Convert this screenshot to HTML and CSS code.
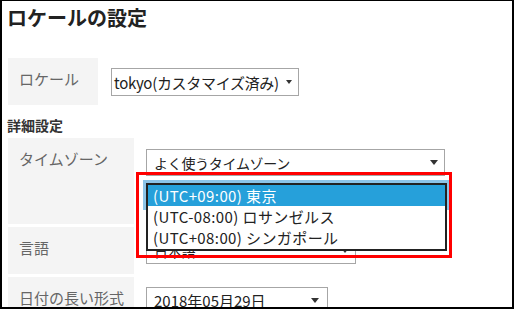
FILE: index.html
```html
<!DOCTYPE html>
<html lang="ja">
<head>
<meta charset="utf-8">
<title>ロケールの設定</title>
<link rel="stylesheet" href="styles.css">
</head>
<body>
<div class="frame">
  <h1 class="title">ロケールの設定</h1>

  <div class="row row-locale">
    <div class="lbl lbl-locale">ロケール</div>
    <div class="sel sel-locale"><span class="sel-text">tokyo(カスタマイズ済み)</span><span class="arrow arrow-small"></span></div>
  </div>

  <div class="section">詳細設定</div>

  <div class="row row-tz">
    <div class="lbl lbl-wide lbl-tz">タイムゾーン</div>
    <div class="sel sel-tz"><span class="sel-text">よく使うタイムゾーン</span><span class="arrow"></span></div>
  </div>

  <div class="row row-lang">
    <div class="lbl lbl-wide">言語</div>
    <div class="sel sel-lang"><span class="sel-text">日本語</span><span class="arrow"></span></div>
  </div>

  <div class="row row-date">
    <div class="lbl lbl-wide">日付の長い形式</div>
    <div class="sel sel-date"><span class="sel-text">2018年05月29日</span><span class="arrow"></span></div>
  </div>

  <div class="focus-ring"></div>
  <ul class="dropdown">
    <li class="opt opt-selected">(UTC+09:00) 東京</li>
    <li class="opt">(UTC-08:00) ロサンゼルス</li>
    <li class="opt">(UTC+08:00) シンガポール</li>
  </ul>
  <div class="highlight"></div>
</div>
</body>
</html>
```

FILE: styles.css
```css
html, body {
  margin: 0;
  padding: 0;
  background: #fff;
}

body {
  font-family: "Noto Sans CJK JP", "Noto Sans", sans-serif;
  color: #222;
}

.frame {
  position: relative;
  width: 514px;
  height: 309px;
  box-sizing: border-box;
  border: 2px solid #000;
  border-top-width: 1px;
  padding: 5px 0 0 6px;
  overflow: hidden;
}

.title {
  margin: 0 0 28px -1px;
  font-size: 20px;
  line-height: 24px;
  font-weight: bold;
  color: #222;
}

.row {
  display: flex;
  align-items: flex-start;
}

.lbl {
  box-sizing: border-box;
  background: #f4f4f4;
  color: #666;
  font-size: 15px;
  line-height: 20px;
  padding: 11px 0 0 11px;
  flex: none;
}

.lbl-locale {
  width: 90px;
  height: 47px;
}

.lbl-wide {
  width: 126px;
  height: 47px;
}

.lbl-tz {
  height: 86px;
}

.row-lang,
.row-date {
  margin-top: 3px;
}

.section {
  margin-top: 10px;
  margin-bottom: 3px;
  margin-left: -1px;
  font-size: 14px;
  line-height: 20px;
  font-weight: bold;
  color: #333;
}

.sel {
  box-sizing: border-box;
  display: flex;
  align-items: center;
  justify-content: space-between;
  border: 1px solid #a6a6a6;
  background: #fff;
  margin-top: 10px;
  margin-left: 12px;
  height: 27px;
  padding: 0 6px 0 7px;
  font-size: 14px;
  letter-spacing: -0.3px;
  color: #222;
  flex: none;
}

.sel-text {
  white-space: nowrap;
}

.sel-locale {
  margin-left: 13px;
  width: 188px;
  height: 28px;
  padding: 0 6px 0 2px;
  font-size: 15px;
  letter-spacing: -0.3px;
}

.sel-tz {
  margin-top: 11px;
  width: 299px;
}

.sel-lang {
  width: 210px;
}

.sel-date {
  width: 182px;
  padding-right: 8px;
  font-size: 15px;
  letter-spacing: 0;
}

.arrow {
  display: inline-block;
  width: 0;
  height: 0;
  border-left: 4.5px solid transparent;
  border-right: 4.5px solid transparent;
  border-top: 5px solid #333;
  flex: none;
}

.arrow-small {
  border-left-width: 3.5px;
  border-right-width: 3.5px;
  border-top-width: 4px;
}

/* opened dropdown overlay */
.focus-ring {
  position: absolute;
  left: 141px;
  top: 179px;
  width: 306px;
  height: 30px;
  background: #8cc4e8;
}

.dropdown {
  position: absolute;
  left: 144px;
  top: 182px;
  width: 301px;
  height: 68px;
  box-sizing: border-box;
  margin: 0;
  padding: 0;
  list-style: none;
  border: 2px solid #222;
  background: #fff;
}

.opt {
  height: 21px;
  line-height: 21px;
  padding-left: 5px;
  font-size: 15px;
  letter-spacing: 0.4px;
  color: #222;
  white-space: nowrap;
}

.opt-selected {
  background: #26a0da;
  color: #fff;
}

.highlight {
  position: absolute;
  left: 134px;
  top: 171px;
  width: 316px;
  height: 86px;
  box-sizing: border-box;
  border: 3px solid #f00;
}
```
